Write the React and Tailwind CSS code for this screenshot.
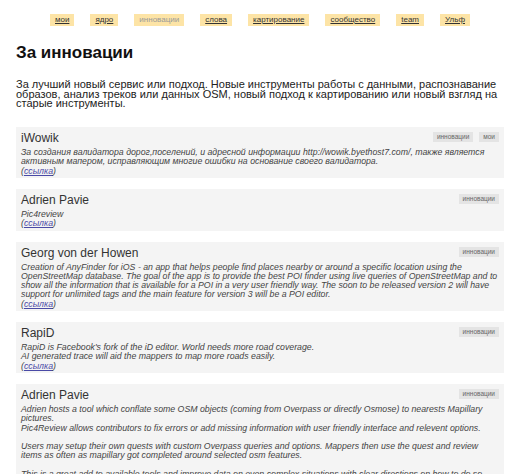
import React from "react";

const navItems = [
  { label: "мои" },
  { label: "ядро" },
  { label: "инновации", active: true },
  { label: "слова" },
  { label: "картирование" },
  { label: "сообщество" },
  { label: "team" },
  { label: "Ульф" },
];

const cards = [
  {
    title: "iWowik",
    tags: ["инновации", "мои"],
    desc: "За создания валидатора дорог,поселений, и адресной информации http://wowik.byethost7.com/, также является активным мапером, исправляющим многие ошибки на основание своего валидатора.",
  },
  { title: "Adrien Pavie", tags: ["инновации"], desc: "Pic4review" },
  {
    title: "Georg von der Howen",
    tags: ["инновации"],
    desc: "Creation of AnyFinder for iOS - an app that helps people find places nearby or around a specific location using the OpenStreetMap database. The goal of the app is to provide the best POI finder using live queries of OpenStreetMap and to show all the information that is available for a POI in a very user friendly way. The soon to be released version 2 will have support for unlimited tags and the main feature for version 3 will be a POI editor.",
  },
  {
    title: "RapiD",
    tags: ["инновации"],
    desc: "RapiD is Facebook's fork of the iD editor. World needs more road coverage.\nAI generated trace will aid the mappers to map more roads easily.",
  },
  {
    title: "Adrien Pavie",
    tags: ["инновации"],
    desc: "Adrien hosts a tool which conflate some OSM objects (coming from Overpass or directly Osmose) to nearests Mapillary pictures.\nPic4Review allows contributors to fix errors or add missing information with user friendly interface and relevent options.\n\nUsers may setup their own quests with custom Overpass queries and options. Mappers then use the quest and review items as often as mapillary got completed around selected osm features.\n\nThis is a great add to available tools and improve data on even complex situations with clear directions on how to do so.",
  },
];

function Card({ title, tags, desc }) {
  return (
    <div className="bg-[#f4f4f4] px-[5px] pt-[4px] pb-[2px]">
      <div className="flex items-start justify-between">
        <div className="text-[12px] leading-[14px] text-[#333]">{title}</div>
        <div className="flex gap-[6px] pt-[1px]">
          {tags.map((t) => (
            <span
              key={t}
              className="bg-[#e4e4e4] px-[4px] text-[6.5px] leading-[10px] text-[#666]"
            >
              {t}
            </span>
          ))}
        </div>
      </div>
      <div className="mt-[3px] text-[8.75px] leading-[9.3px] italic text-[#444]">
        <div className="whitespace-pre-line">{desc}</div>
        <div>
          (<a href="#" className="text-[#4a4aa6] underline">ссылка</a>)
        </div>
      </div>
    </div>
  );
}

export default function App() {
  return (
    <div
      className="min-h-[474px] bg-white px-4"
      style={{ fontFamily: '"Liberation Sans", Arial, sans-serif' }}
    >
      <nav className="flex justify-center gap-[16px] pt-[14px]">
        {navItems.map((n) => (
          <a
            key={n.label}
            href="#"
            className={
              n.active
                ? "flex h-[12px] items-center bg-[#fde4a6] px-[5px] text-[8px] text-[#9a9a9a] no-underline"
                : "flex h-[12px] items-center bg-[#fde4a6] px-[5px] text-[8px] text-[#333] underline"
            }
          >
            {n.label}
          </a>
        ))}
      </nav>
      <h1 className="mt-[17px] text-[17px] font-bold leading-[20px] text-[#111]">
        За инновации
      </h1>
      <p className="mt-[17px] text-[11px] leading-[9.7px] text-[#222]">
        За лучший новый сервис или подход. Новые инструменты работы с данными, распознавание образов, анализ треков или данных OSM, новый подход к картированию или новый взгляд на старые инструменты.
      </p>
      <div className="mt-[18px] flex flex-col gap-[11px]">
        {cards.map((c, i) => (
          <Card key={i} {...c} />
        ))}
      </div>
    </div>
  );
}
